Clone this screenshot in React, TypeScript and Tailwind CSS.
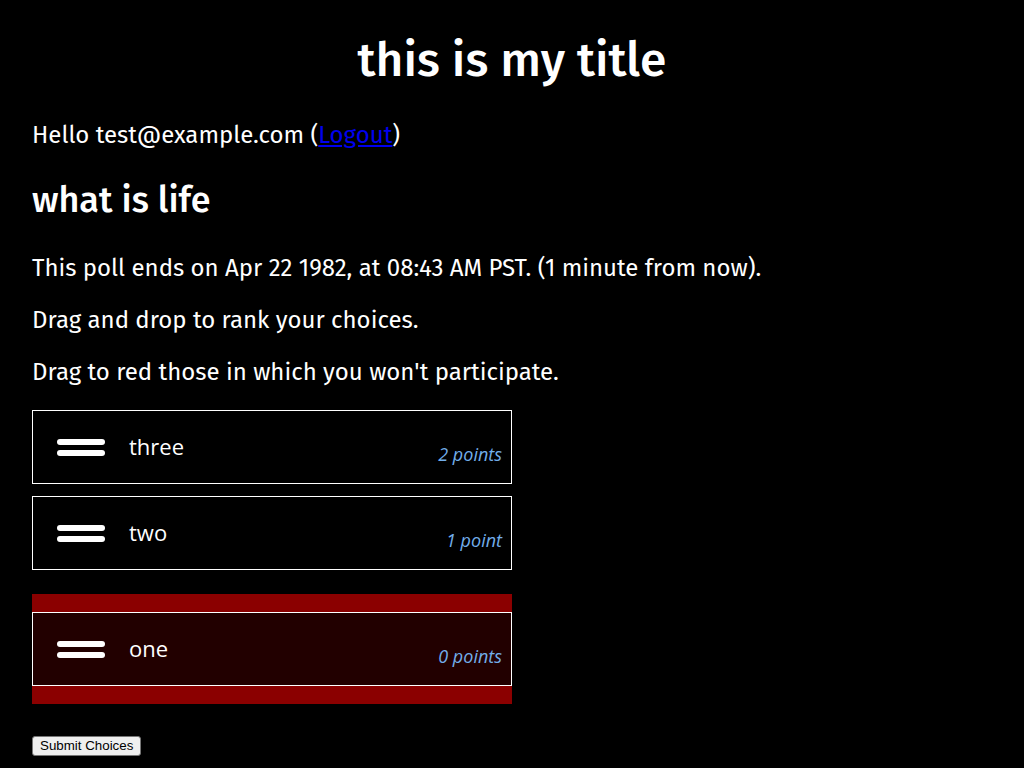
import React from 'react';

type Choice = { label: string; points: string };

const ranked: Choice[] = [
  { label: 'three', points: '2 points' },
  { label: 'two', points: '1 point' },
];

const excluded: Choice[] = [{ label: 'one', points: '0 points' }];

function Handle() {
  return (
    <div className="flex w-[48px] shrink-0 flex-col gap-[5px]">
      <span className="block h-[6px] rounded-full bg-white" />
      <span className="block h-[6px] rounded-full bg-white" />
    </div>
  );
}

function ChoiceRow({ choice, dim }: { choice: Choice; dim?: boolean }) {
  return (
    <div
      className={`flex h-[74px] items-center border border-white pl-[24px] pr-[9px] ${
        dim ? 'bg-[#220000]' : 'bg-black'
      }`}
    >
      <Handle />
      <span className="mb-[2px] ml-[24px] flex-1 font-['Open_Sans',sans-serif] text-[22px] text-white">
        {choice.label}
      </span>
      <span className="mb-[15px] self-end font-['Open_Sans',sans-serif] text-[18px] italic text-[#72aeea]">
        {choice.points}
      </span>
    </div>
  );
}

export default function App() {
  return (
    <div className="min-h-screen bg-black font-['Fira_Sans','Lato',sans-serif] text-white">
      <h1 className="pt-[30px] text-center text-[48px] leading-[60px] font-medium">this is my title</h1>

      <div className="px-[32px]">
        <p className="mt-[30px] text-[24px] leading-[30px]">
          Hello test@example.com (
          <a href="#" className="text-[#0000ee] underline">
            Logout
          </a>
          )
        </p>

        <h2 className="mt-[28px] text-[36px] leading-[44px] font-medium">what is life</h2>

        <p className="mt-[31px] text-[24px] leading-[30px]">
          This poll ends on Apr 22 1982, at 08:43 AM PST. (1 minute from now).
        </p>
        <p className="mt-[22px] text-[24px] leading-[30px]">Drag and drop to rank your choices.</p>
        <p className="mt-[22px] text-[24px] leading-[30px]">
          Drag to red those in which you won't participate.
        </p>

        <div className="mt-[23px] flex w-[480px] flex-col gap-[12px]">
          {ranked.map(c => (
            <ChoiceRow key={c.label} choice={c} />
          ))}
        </div>

        <div className="mt-[24px] w-[480px] bg-[#8b0000] py-[18px]">
          {excluded.map(c => (
            <ChoiceRow key={c.label} choice={c} dim />
          ))}
        </div>

        <button
          type="button"
          className="mt-[32px] rounded-[3px] border border-[#767676] bg-[#efefef] px-[7px] py-[1px] font-['Liberation_Sans',Arial,sans-serif] text-[13.33px] leading-[16px] text-black"
        >
          Submit Choices
        </button>
      </div>
    </div>
  );
}
